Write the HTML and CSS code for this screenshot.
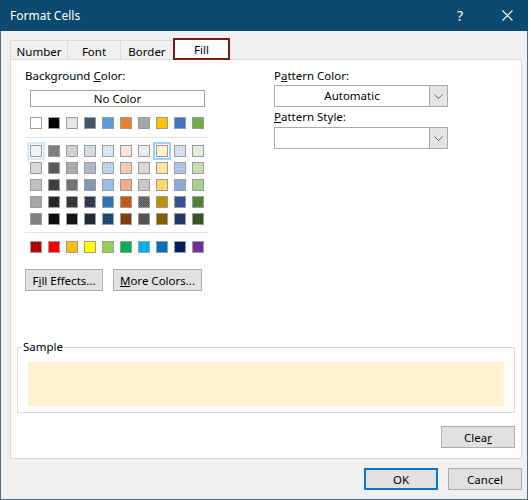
FILE: index.html
```html
<!DOCTYPE html>
<html lang="en">
<head>
    <meta charset="UTF-8">
    <title>Format Cells</title>
    <link rel="stylesheet" href="styles.css">
</head>
<body>
    <div class="window">
        <div class="titlebar">
            <span class="title">Format Cells</span>
            <span class="help">?</span>
            <span class="close">
                <svg width="11" height="11" viewBox="0 0 11 11">
                    <path d="M0.5 0.5 L10.5 10.5 M10.5 0.5 L0.5 10.5" stroke="#fff" stroke-width="1.1" fill="none"/>
                </svg>
            </span>
        </div>
        <div class="content">
            <div class="tabs">
                <div class="tab wide">Number</div>
                <div class="tab">Font</div>
                <div class="tab">Border</div>
                <div class="tab wide active">Fill</div>
            </div>
            <div class="panel">
                <div class="top">
                    <div class="left">
                        <div class="label">Background <u>C</u>olor:</div>
                        <div class="no-color">No Color</div>
                        <div class="swatch-row" id="theme-row"></div>
                        <div class="divider"></div>
                        <div class="swatch-grid" id="tint-grid"></div>
                        <div class="divider"></div>
                        <div class="swatch-row" id="standard-row"></div>
                        <div class="buttons">
                            <button class="btn fill-btn">F<u>i</u>ll Effects...</button>
                            <button class="btn more-btn"><u>M</u>ore Colors...</button>
                        </div>
                    </div>
                    <div class="right">
                        <div class="label">P<u>a</u>ttern Color:</div>
                        <div class="combo">
                            <span class="combo-text">Automatic</span>
                            <span class="combo-arrow">
                                <svg width="9" height="5" viewBox="0 0 9 5"><path d="M0.5 0.5 L4.5 4.5 L8.5 0.5" stroke="#606060" fill="none"/></svg>
                            </span>
                        </div>
                        <div class="label second"><u>P</u>attern Style:</div>
                        <div class="combo">
                            <span class="combo-text"></span>
                            <span class="combo-arrow">
                                <svg width="9" height="5" viewBox="0 0 9 5"><path d="M0.5 0.5 L4.5 4.5 L8.5 0.5" stroke="#606060" fill="none"/></svg>
                            </span>
                        </div>
                    </div>
                </div>
                <fieldset class="sample">
                    <legend>Sample</legend>
                    <div class="sample-fill"></div>
                </fieldset>
                <div class="clear-row">
                    <button class="btn">Clea<u>r</u></button>
                </div>
            </div>
            <div class="footer">
                <button class="btn ok">OK</button>
                <button class="btn">Cancel</button>
            </div>
        </div>
    </div>
    <script>
        const theme = ['#ffffff','#000000','#e7e6e6','#44546a','#5b9bd5','#ed7d31','#a5a5a5','#ffc000','#4472c4','#70ad47'];
        const tints = [
            ['#f2f2f2','#7f7f7f','#d0cece','#d6dce4','#ddebf7','#fce4d6','#ededed','#fff2cc','#d9e1f2','#e2efda'],
            ['#d9d9d9','#595959','#aeaaaa','#acb9ca','#bdd7ee','#f8cbad','#dbdbdb','#ffe699','#b4c6e7','#c6e0b4'],
            ['#bfbfbf','#404040','#757171','#8497b0','#9bc2e6','#f4b084','#c9c9c9','#ffd966','#8ea9db','#a9d08e'],
            ['#a6a6a6','#262626','#3a3838','#333f4f','#2f75b5','#c65911','#7b7b7b','#bf8f00','#305496','#548235'],
            ['#808080','#0d0d0d','#161616','#222b35','#1f4e78','#833c0c','#525252','#806000','#203764','#375623']
        ];
        const standard = ['#c00000','#ff0000','#ffc000','#ffff00','#92d050','#00b050','#00b0f0','#0070c0','#002060','#7030a0'];

        // cells that show a dithered pattern in the real dialog
        const patterns = {
            't0-4': 'dots-light', 't0-8': 'dots-light', 't1-4': 'dots-light', 't1-8': 'dots-light',
            't3-3': 'dots-dark', 't3-6': 'checker', 't4-2': 'checker', 't4-4': 'dots-dark',
            's0': 'dots-dark'
        };

        function makeSwatch(color, key) {
            const el = document.createElement('div');
            el.className = 'swatch';
            el.style.backgroundColor = color;
            if (patterns[key]) el.classList.add(patterns[key]);
            return el;
        }

        const themeRow = document.getElementById('theme-row');
        theme.forEach((c, i) => themeRow.appendChild(makeSwatch(c, 'h' + i)));

        const grid = document.getElementById('tint-grid');
        tints.forEach((row, r) => {
            row.forEach((c, i) => {
                const el = makeSwatch(c, 't' + r + '-' + i);
                if (r === 0 && i === 0) el.classList.add('focus');
                if (r === 0 && i === 7) el.classList.add('selected');
                grid.appendChild(el);
            });
        });

        const standardRow = document.getElementById('standard-row');
        standard.forEach((c, i) => standardRow.appendChild(makeSwatch(c, 's' + i)));
    </script>
</body>
</html>
```

FILE: styles.css
```css
body {
    margin: 0;
    background-color: #ffffff;
    font-family: "Noto Sans", "Open Sans", sans-serif;
    font-size: 11.5px;
    color: #000;
}

.window {
    width: 528px;
    height: 500px;
    box-sizing: border-box;
    background-color: #f0f0f0;
    border: 1px solid #4d6f8e;
    border-top: none;
    display: flex;
    flex-direction: column;
}

.titlebar {
    height: 31px;
    flex-shrink: 0;
    background-color: #0b496e;
    color: #fff;
    display: flex;
    align-items: center;
    margin: 0 -1px;
}

.title {
    flex: 1;
    padding-left: 10px;
    font-size: 12px;
}

.help {
    width: 52px;
    text-align: center;
    font-size: 14px;
}

.close {
    width: 42px;
    display: flex;
    justify-content: center;
}

.content {
    flex: 1;
    display: flex;
    flex-direction: column;
    padding: 7px 5px 0 9px;
}

/* tabs */
.tabs {
    display: flex;
    align-items: flex-end;
    height: 21px;
}

.tab {
    width: 53px;
    height: 19px;
    box-sizing: border-box;
    border: 1px solid #d9d9d9;
    border-bottom: none;
    border-right: none;
    text-align: center;
    line-height: 19px;
    padding-top: 1px;
}

.tab.wide {
    width: 57px;
}

.tab.active {
    height: 22px;
    margin-bottom: -1px;
    border: 2px solid #7a1c1c;
    background-color: #fff;
    line-height: 17px;
    position: relative;
    z-index: 1;
}

.panel {
    height: 400px;
    box-sizing: border-box;
    background-color: #fff;
    border: 1px solid #d9d9d9;
    padding: 8px 6px 0 6px;
    display: flex;
    flex-direction: column;
}

.top {
    display: flex;
    padding-left: 8px;
}

.left {
    width: 249px;
}

.label {
    line-height: 16px;
}

.label.second {
    margin-top: 2px;
}

.no-color {
    width: 175px;
    height: 17px;
    box-sizing: border-box;
    border: 1px solid #a0a0a0;
    margin: 6px 0 0 5px;
    text-align: center;
    line-height: 15px;
}

.swatch-row {
    display: flex;
    gap: 6px;
    margin: 10px 0 0 5px;
}

#standard-row {
    margin-top: 8px;
}

.swatch-grid {
    display: grid;
    grid-template-columns: repeat(10, 12px);
    column-gap: 6px;
    row-gap: 5px;
    margin: 7px 0 0 5px;
}

.swatch {
    width: 12px;
    height: 12px;
    box-sizing: border-box;
    border: 1px solid #9c9c9c;
}

.swatch.focus {
    outline: 2px solid #d4eafc;
    outline-offset: 1px;
}

.swatch.selected {
    outline: 2px solid #99d1ff;
    outline-offset: 1px;
}

.dots-light {
    background-image: radial-gradient(rgba(120, 150, 190, 0.45) 0.7px, transparent 0.9px);
    background-size: 3px 3px;
}

.dots-dark {
    background-image: radial-gradient(rgba(0, 0, 0, 0.6) 0.7px, transparent 0.9px);
    background-size: 3px 3px;
}

.checker {
    background-image: repeating-conic-gradient(rgba(0, 0, 0, 0.35) 0 25%, transparent 0 50%);
    background-size: 2px 2px;
}

.divider {
    width: 184px;
    height: 1px;
    background-color: #e3e3e3;
    margin-top: 8px;
}

.swatch-grid + .divider {
    margin-top: 7px;
}

.buttons {
    display: flex;
    gap: 10px;
    margin-top: 16px;
}

.btn {
    height: 22px;
    box-sizing: border-box;
    background-color: #e1e1e1;
    border: 1px solid #adadad;
    font-family: inherit;
    font-size: 11.5px;
    color: #000;
    padding: 0;
}

.fill-btn {
    width: 78px;
}

.more-btn {
    width: 89px;
}

.right {
    width: 174px;
}

.combo {
    display: flex;
    height: 22px;
    box-sizing: border-box;
    border: 1px solid #aaaaaa;
    margin-top: 1px;
}

.right .label.second + .combo {
    margin-top: 2px;
}

.combo-text {
    flex: 1;
    text-align: center;
    line-height: 20px;
}

.combo-arrow {
    width: 17px;
    background-color: #e5e5e5;
    border-left: 1px solid #aaaaaa;
    display: flex;
    align-items: center;
    justify-content: center;
}

/* sample */
.sample {
    margin: 48px 0 0 0;
    padding: 7px 10px 6px 10px;
    border: 1px solid #dcdcdc;
}

.sample legend {
    padding: 0 1px;
    margin-left: -6px;
    line-height: 16px;
}

.sample-fill {
    height: 44px;
    background-color: #fff2cc;
}

.clear-row {
    display: flex;
    justify-content: flex-end;
    margin-top: 13px;
}

.clear-row .btn {
    width: 74px;
}

.footer {
    display: flex;
    justify-content: flex-end;
    gap: 10px;
    margin-top: 9px;
}

.footer .btn {
    width: 74px;
}

.btn.ok {
    border: 2px solid #0078d7;
}
```
